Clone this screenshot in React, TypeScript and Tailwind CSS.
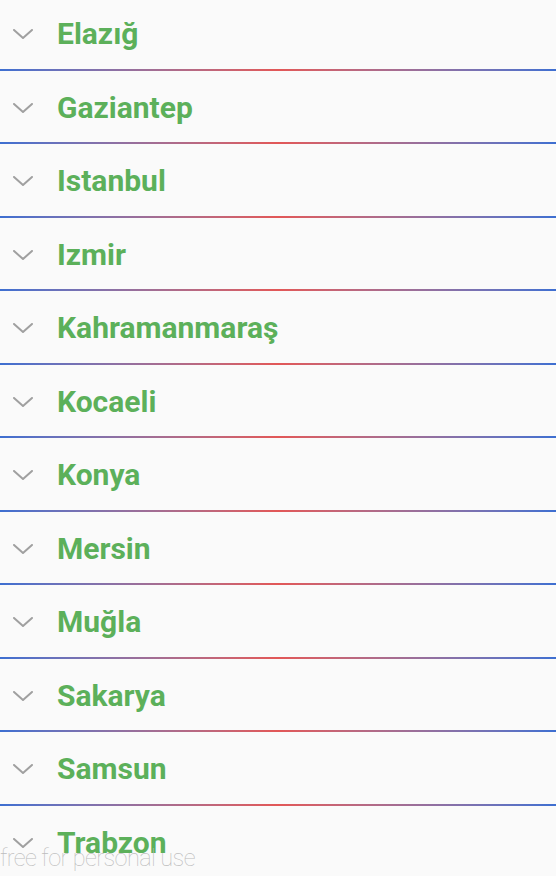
const cities = [
  'Elazığ',
  'Gaziantep',
  'Istanbul',
  'Izmir',
  'Kahramanmaraş',
  'Kocaeli',
  'Konya',
  'Mersin',
  'Muğla',
  'Sakarya',
  'Samsun',
  'Trabzon',
]

function Chevron() {
  return (
    <svg width="20" height="10" viewBox="0 0 20 10" className="ml-[13px] shrink-0" fill="none">
      <polyline points="1,1 10,9 19,1" stroke="#a0a0a0" strokeWidth="2" strokeLinecap="round" strokeLinejoin="round" />
    </svg>
  )
}

export default function App() {
  return (
    <div
      className="relative w-[556px] h-[876px] overflow-hidden bg-[#fafafa]"
      style={{ fontFamily: 'Roboto, "Noto Sans", sans-serif' }}
    >
      {cities.map((city) => (
        <div key={city}>
          <div className="flex items-center h-[68.5px]">
            <Chevron />
            <span className="ml-[24px] text-[30px] font-bold text-[#5cb05a] leading-none">{city}</span>
          </div>
          <div className="h-[2px] bg-gradient-to-r from-[#3d6fd1] via-[#e25757] to-[#3d6fd1]" />
          <div className="h-[3px]" />
        </div>
      ))}
      <div className="absolute left-0 bottom-[6px] text-[23.5px] font-thin text-[#bdbdbd] leading-none tracking-[-0.6px]">
        free for personal use
      </div>
    </div>
  )
}
